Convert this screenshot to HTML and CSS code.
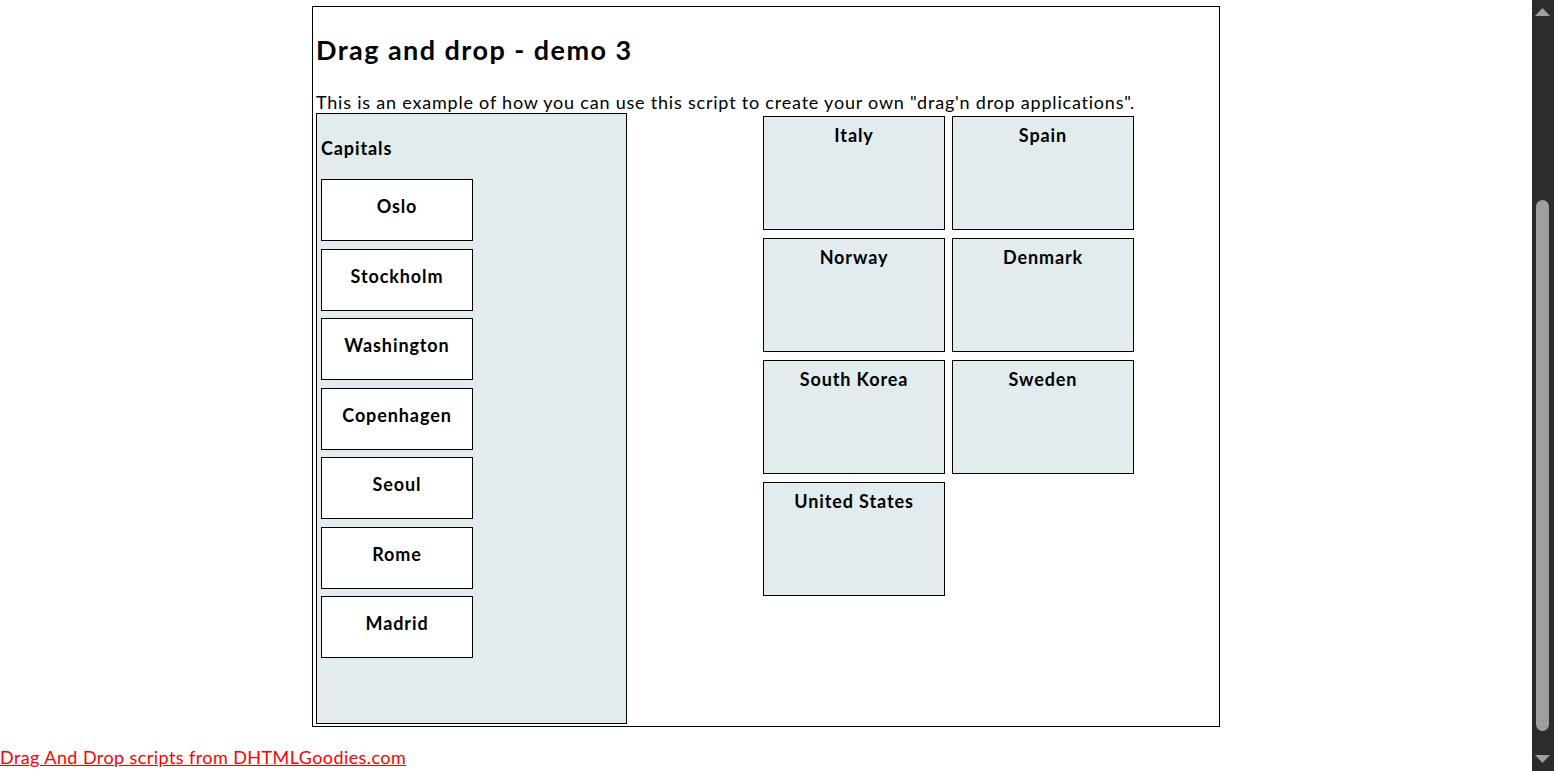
FILE: index.html
```html
<!DOCTYPE html>
<html lang="en">
<head>
<meta charset="utf-8">
<title>Drag and drop - demo 3</title>
<link rel="stylesheet" href="styles.css">
</head>
<body>
<div class="window">
  <div class="page">
    <div class="main">
      <h2 class="title">Drag and drop - demo 3</h2>
      <p class="intro">This is an example of how you can use this script to create your own "drag'n drop applications".</p>
      <div class="board">
        <div class="capitals">
          <div class="capitals-head">Capitals</div>
          <div class="capital-list">
            <div class="capital">Oslo</div>
            <div class="capital">Stockholm</div>
            <div class="capital">Washington</div>
            <div class="capital">Copenhagen</div>
            <div class="capital">Seoul</div>
            <div class="capital">Rome</div>
            <div class="capital">Madrid</div>
          </div>
        </div>
        <div class="countries">
          <div class="country">Italy</div>
          <div class="country">Spain</div>
          <div class="country">Norway</div>
          <div class="country">Denmark</div>
          <div class="country">South Korea</div>
          <div class="country">Sweden</div>
          <div class="country">United States</div>
        </div>
      </div>
    </div>
    <a class="credit" href="#">Drag And Drop scripts from DHTMLGoodies.com</a>
  </div>
  <div class="scrollbar">
    <div class="sb-button">
      <svg width="22" height="22" viewBox="0 0 22 22"><polygon points="3,16 10.5,8 18,16" fill="#9f9f9f"/></svg>
    </div>
    <div class="sb-track">
      <div class="sb-thumb"></div>
    </div>
    <div class="sb-button">
      <svg width="22" height="22" viewBox="0 0 22 22"><polygon points="3,6 18,6 10.5,14" fill="#9f9f9f"/></svg>
    </div>
  </div>
</div>
</body>
</html>
```

FILE: styles.css
```css
body {
  margin: 0;
  font-family: Lato, "Open Sans", sans-serif;
  font-size: 18px;
  line-height: 21px;
  color: #000;
  background: #fff;
}
.window {
  display: flex;
  height: 771px;
  overflow: hidden;
}
.page {
  flex: 1;
  padding-top: 6px;
}
.main {
  box-sizing: border-box;
  width: 908px;
  margin: 0 auto;
  border: 1px solid #000;
  padding: 3px 3px 2px 3px;
}
.title {
  margin: 24px 0 26px 0;
  font-size: 27px;
  line-height: 32px;
  font-weight: bold;
  letter-spacing: 1.45px;
}
.intro {
  margin: 0;
  letter-spacing: 0.79px;
  white-space: nowrap;
}
.board {
  display: flex;
  align-items: flex-start;
}
.capitals {
  box-sizing: border-box;
  width: 311px;
  height: 611px;
  border: 1px solid #000;
  background: #e2ebed;
  padding: 0 4px;
}
.capitals-head {
  margin: 23.5px 0 20.5px 0;
  font-weight: bold;
  letter-spacing: 0.9px;
}
.capital-list {
  display: flex;
  flex-direction: column;
  gap: 7.5px;
}
.capital {
  box-sizing: border-box;
  width: 152px;
  height: 62px;
  border: 1px solid #000;
  background: #fff;
  padding-top: 16px;
  text-align: center;
  font-weight: bold;
  letter-spacing: 0.9px;
}
.countries {
  margin: 3px 0 0 136px;
  display: grid;
  grid-template-columns: 182px 182px;
  grid-auto-rows: 114px;
  column-gap: 7px;
  row-gap: 8px;
}
.country {
  box-sizing: border-box;
  border: 1px solid #000;
  background: #e2ebed;
  padding-top: 8px;
  text-align: center;
  font-weight: bold;
  letter-spacing: 0.9px;
}
.credit {
  display: inline-block;
  margin-top: 20px;
  color: #f00;
  text-decoration: underline;
  letter-spacing: 0.42px;
}
.scrollbar {
  width: 22px;
  flex: none;
  display: flex;
  flex-direction: column;
  background: #2c2c2c;
}
.sb-button {
  height: 22px;
  flex: none;
}
.sb-button svg {
  display: block;
}
.sb-track {
  flex: 1;
}
.sb-thumb {
  width: 13px;
  height: 531px;
  margin: 178px 0 0 4px;
  border-radius: 6.5px;
  background: #9f9f9f;
}
```
